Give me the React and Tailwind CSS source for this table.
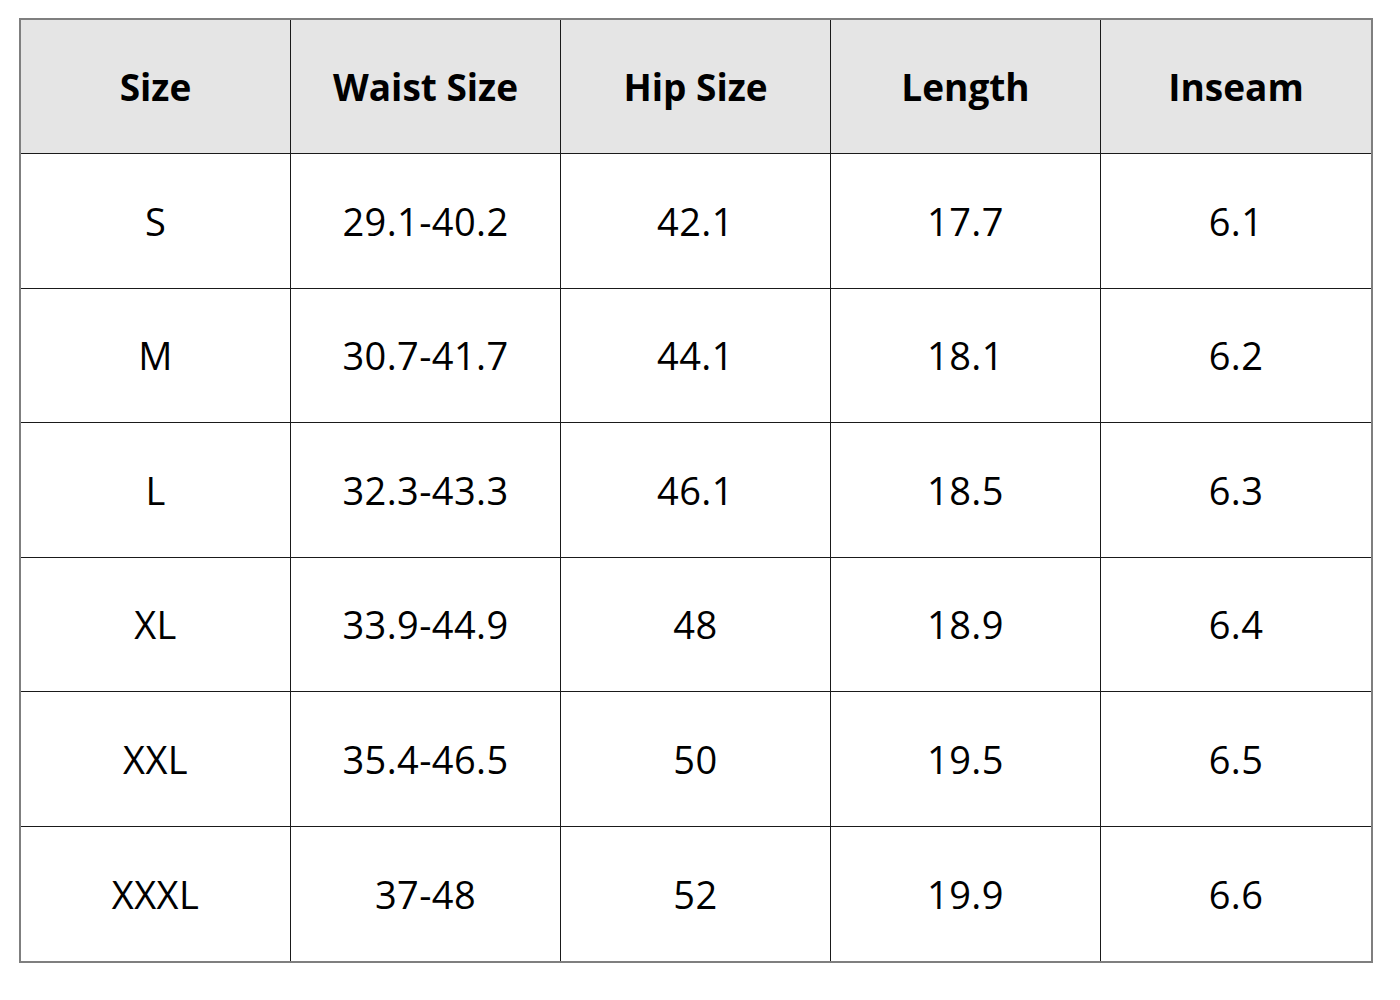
import React from 'react';

const headers = ['Size', 'Waist Size', 'Hip Size', 'Length', 'Inseam'];

const rows = [
    ['S', '29.1-40.2', '42.1', '17.7', '6.1'],
    ['M', '30.7-41.7', '44.1', '18.1', '6.2'],
    ['L', '32.3-43.3', '46.1', '18.5', '6.3'],
    ['XL', '33.9-44.9', '48', '18.9', '6.4'],
    ['XXL', '35.4-46.5', '50', '19.5', '6.5'],
    ['XXXL', '37-48', '52', '19.9', '6.6'],
];

const heights = ['h-[134px]', 'h-[133px]', 'h-[134px]', 'h-[133px]', 'h-[134px]', 'h-[134px]'];

function App() {
    return (
        <div className="w-[1400px] h-[1000px] bg-white pt-[18px] pl-[19px]" style={{ fontFamily: '"Open Sans", sans-serif' }}>
            <div className="w-[1354px] border-2 border-[#7f7f7f]">
                <div className="grid grid-cols-5 bg-[#e5e5e5]">
                    {headers.map((h, i) => (
                        <div
                            key={h}
                            className={`h-[133px] flex items-center justify-center text-[37px] font-bold text-black ${i < 4 ? 'border-r border-[#1a1a1a]' : ''}`}
                        >
                            {h}
                        </div>
                    ))}
                </div>
                {rows.map((r, ri) => (
                    <div key={ri} className="grid grid-cols-5 border-t border-[#1a1a1a]">
                        {r.map((c, i) => (
                            <div
                                key={i}
                                className={`${heights[ri]} flex items-center justify-center text-[38px] tracking-[0.4px] text-black ${i < 4 ? 'border-r border-[#1a1a1a]' : ''}`}
                            >
                                {c}
                            </div>
                        ))}
                    </div>
                ))}
            </div>
        </div>
    );
}

export default App;
